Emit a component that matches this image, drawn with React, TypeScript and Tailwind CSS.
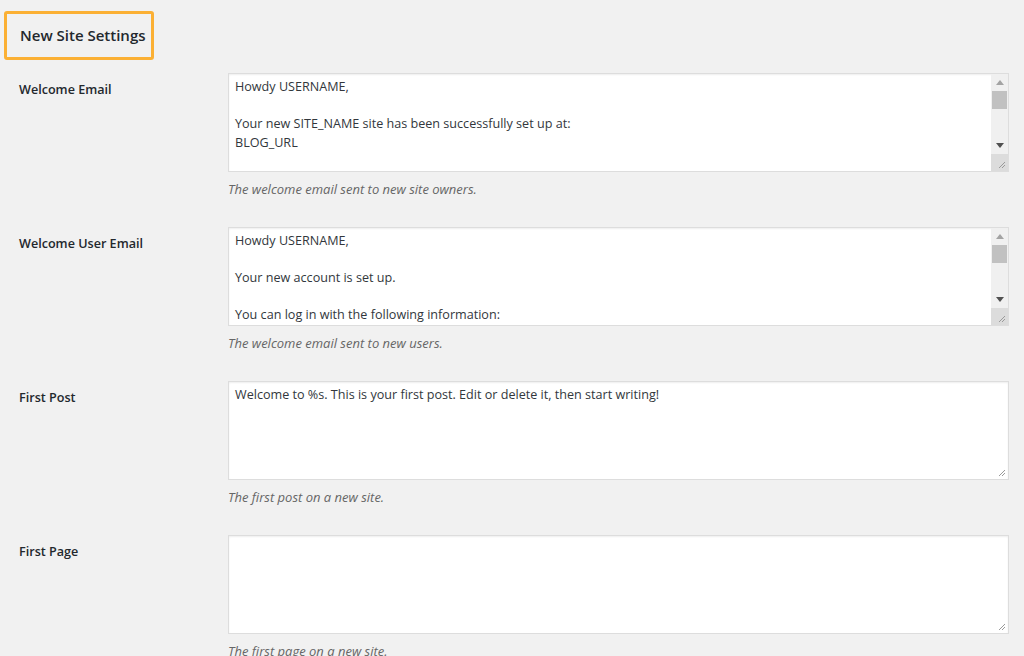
const FONT = "font-['Open_Sans','Noto_Sans',sans-serif]";

interface Field {
  label: string;
  lines: string[];
  help: string;
  scroll: boolean;
}

const FIELDS: Field[] = [
  {
    label: "Welcome Email",
    lines: [
      "Howdy USERNAME,",
      "",
      "Your new SITE_NAME site has been successfully set up at:",
      "BLOG_URL",
      "",
    ],
    help: "The welcome email sent to new site owners.",
    scroll: true,
  },
  {
    label: "Welcome User Email",
    lines: [
      "Howdy USERNAME,",
      "",
      "Your new account is set up.",
      "",
      "You can log in with the following information:",
    ],
    help: "The welcome email sent to new users.",
    scroll: true,
  },
  {
    label: "First Post",
    lines: ["Welcome to %s. This is your first post. Edit or delete it, then start writing!"],
    help: "The first post on a new site.",
    scroll: false,
  },
  {
    label: "First Page",
    lines: [],
    help: "The first page on a new site.",
    scroll: false,
  },
];

function Grip() {
  return (
    <svg width="9" height="9" viewBox="0 0 9 9" className="absolute bottom-[2px] right-[2px]">
      <path d="M8 2 L2 8 M8 5 L5 8" stroke="#9a9a9a" strokeWidth="1" />
    </svg>
  );
}

function FakeScrollbar() {
  return (
    <div className="absolute top-0 right-0 bottom-0 flex w-[17px] flex-col bg-[#f0f0f0]">
      <div className="flex h-[17px] items-center justify-center">
        <svg width="8" height="5" viewBox="0 0 8 5">
          <path d="M0 5 L4 0 L8 5 Z" fill="#a3a3a3" />
        </svg>
      </div>
      <div className="mx-[1px] h-[18px] bg-[#c1c1c1]" />
      <div className="flex-1" />
      <div className="flex h-[17px] items-center justify-center">
        <svg width="8" height="5" viewBox="0 0 8 5">
          <path d="M0 0 L8 0 L4 5 Z" fill="#505050" />
        </svg>
      </div>
      <div className="relative h-[17px] bg-[#dcdcdc]">
        <Grip />
      </div>
    </div>
  );
}

function SettingRow({ field }: { field: Field }) {
  return (
    <div className="flex">
      <div className="w-[228px] shrink-0 pl-[19px] pt-[8px] text-[12.6px] leading-[18px] font-semibold text-[#23282d]">
        {field.label}
      </div>
      <div className="w-[781px]">
        <div className="relative h-[99px] overflow-hidden border border-[#dddddd] bg-white shadow-[inset_0_1px_2px_rgba(0,0,0,0.07)]">
          <div className="px-[6px] pt-[4px] text-[12.6px] leading-[18.5px] text-[#32373c]">
            {field.lines.map((line, i) => (
              <div key={i} className="h-[18.5px] whitespace-pre">
                {line}
              </div>
            ))}
          </div>
          {field.scroll ? <FakeScrollbar /> : <Grip />}
        </div>
        <p className="mt-[8px] text-[13px] leading-[18px] italic text-[#666666]">{field.help}</p>
      </div>
    </div>
  );
}

export default function App() {
  return (
    <div className={`min-h-screen w-full overflow-hidden bg-[#f1f1f1] ${FONT}`}>
      <div className="pl-[4px] pt-[11px]">
        <div className="flex h-[49px] w-[150px] items-center rounded-[3px] border-[3px] border-[#fbb034] pl-[13px]">
          <h2 className="text-[15px] font-semibold text-[#23282d]">New Site Settings</h2>
        </div>
      </div>
      <div className="mt-[13px] flex flex-col gap-[29px]">
        {FIELDS.map((f) => (
          <SettingRow key={f.label} field={f} />
        ))}
      </div>
    </div>
  );
}
